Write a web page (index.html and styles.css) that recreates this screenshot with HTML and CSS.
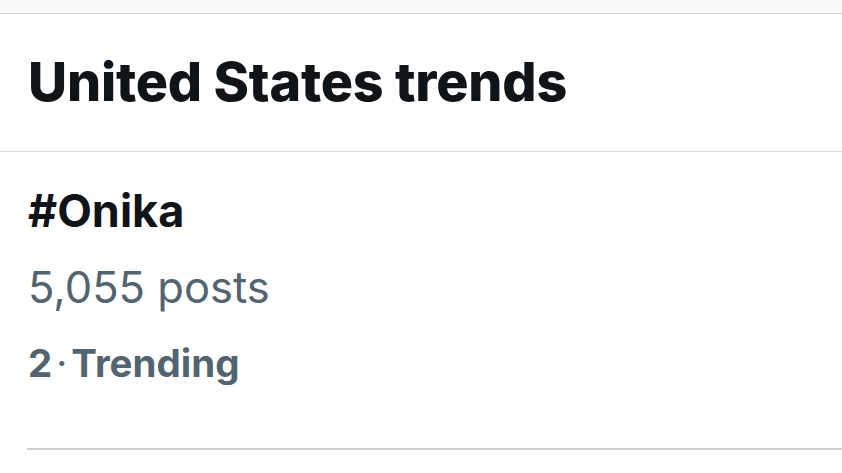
FILE: index.html
```html
<!DOCTYPE html>
<html>
<head>
<meta charset="utf-8">
<link rel="stylesheet" href="styles.css">
</head>
<body>
<div class="topbar"></div>
<header class="head">
  <h1 class="title">United States trends</h1>
</header>
<section class="trend">
  <div class="name">#Onika</div>
  <div class="count">5,055 posts</div>
  <div class="meta">2<span class="dot">·</span>Trending</div>
</section>
</body>
</html>
```
FILE: styles.css
```css
html, body {
  margin: 0;
  padding: 0;
  background: #ffffff;
  font-family: Inter, "Liberation Sans", sans-serif;
  width: 842px;
  height: 473px;
  overflow: hidden;
}
.topbar {
  height: 13px;
  background: #f8f9fa;
  border-bottom: 1px solid #d3d7db;
}
.head {
  height: 138px;
  box-sizing: border-box;
  padding: 0 0 3px 28px;
  border-bottom: 1px solid #d9dcdf;
  display: flex;
  align-items: center;
}
.title {
  margin: 0;
  font-size: 53.8px;
  font-weight: 800;
  color: #0f1419;
  letter-spacing: -0.2px;
}
.trend {
  margin-left: 27px;
  padding: 33px 0 0 1px;
  height: 298px;
  box-sizing: border-box;
  border-bottom: 2px solid #cfd2d5;
}
.name {
  font-size: 45px;
  font-weight: 700;
  color: #0f1419;
  line-height: 52px;
}
.count {
  font-size: 43.5px;
  font-weight: 400;
  color: #536471;
  line-height: 52px;
  margin-top: 24px;
}
.meta {
  font-size: 38.5px;
  font-weight: 700;
  color: #536471;
  line-height: 44px;
  margin-top: 28px;
}
.dot {
  font-weight: 400;
  margin: 0 4px;
}
```
